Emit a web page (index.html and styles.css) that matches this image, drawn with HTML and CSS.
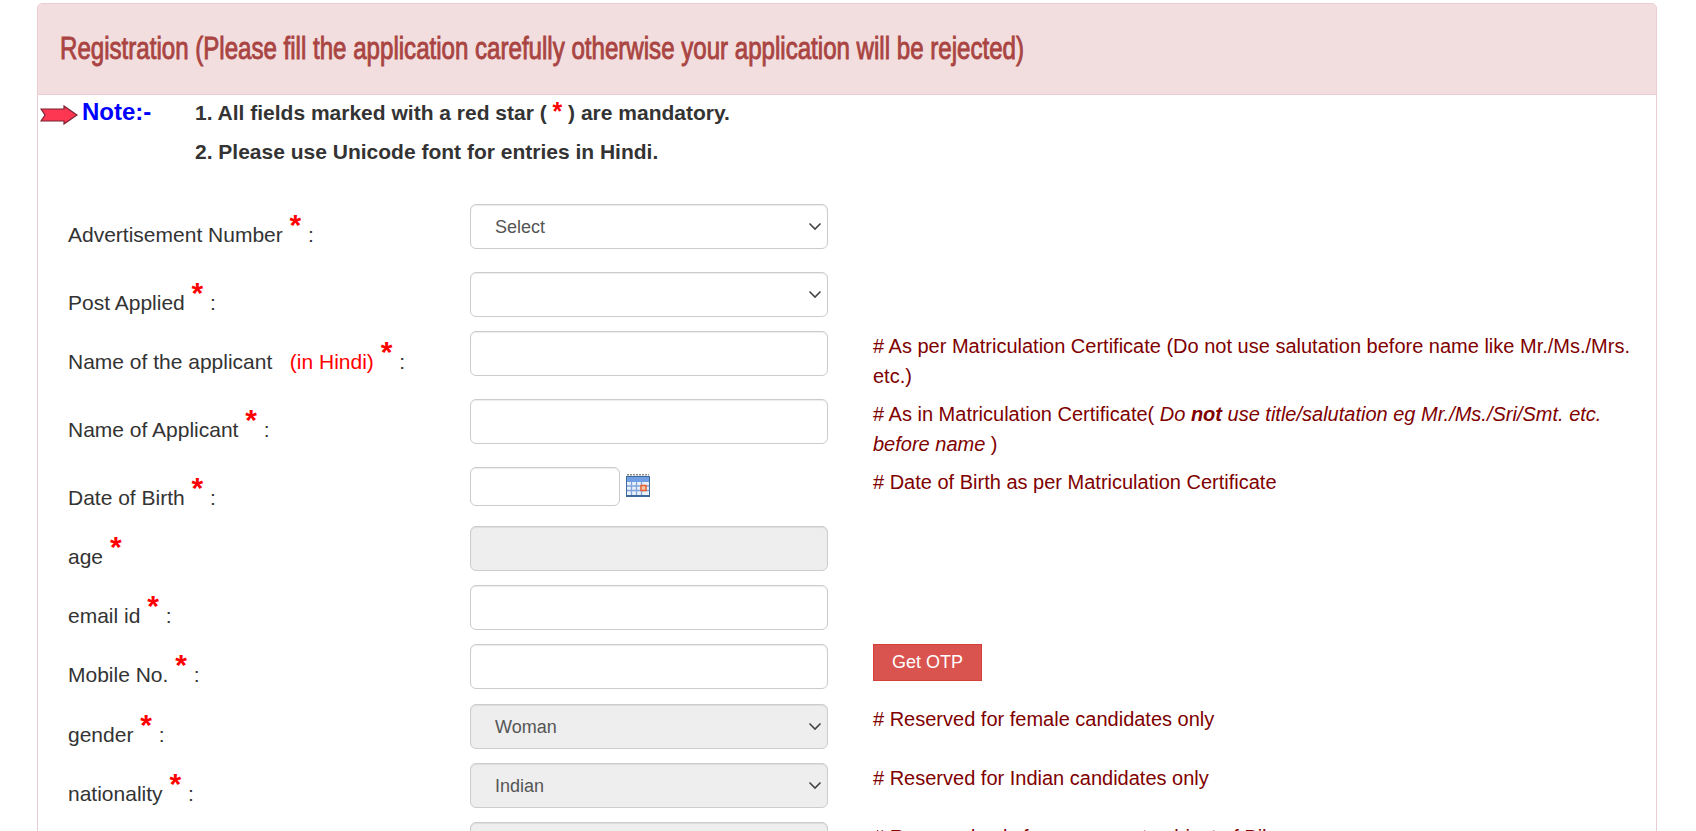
FILE: index.html
```html
<!DOCTYPE html>
<html lang="en">

<head>
  <meta charset="UTF-8">
  <title>Registration</title>
  <link rel="stylesheet" href="styles.css">
</head>

<body>
  <div class="panel">
    <div class="panel-heading">
      <h3 class="panel-title">Registration (Please fill the application carefully otherwise your application will be rejected)</h3>
    </div>
    <div class="panel-body">
      <div class="note">
        <svg class="note-arrow" viewBox="0 0 38 20" width="38" height="20">
          <path d="M1 4 L24 4 L24 1 L37 10 L24 19 L24 16 L1 16 L5 10 Z" fill="#fd3752" stroke="#7a2030" stroke-width="1.2"/>
        </svg>
        <div class="note-title">Note:-</div>
        <div class="note-list">
          <div>1. All fields marked with a red star ( <span class="red note-star">*</span> ) are mandatory.</div>
          <div>2. Please use Unicode font for entries in Hindi.</div>
        </div>
      </div>

      <div class="row tall">
        <label>Advertisement Number <span class="star">*</span> :</label>
        <select class="field"><option>Select</option></select>
      </div>
      <div class="row">
        <label>Post Applied <span class="star">*</span> :</label>
        <select class="field"><option></option></select>
      </div>
      <div class="row tall">
        <label>Name of the applicant &nbsp; <span class="red">(in Hindi)</span> <span class="star">*</span> :</label>
        <input class="field" type="text">
        <p class="hint"># As per Matriculation Certificate (Do not use salutation before name like Mr./Ms./Mrs. etc.)</p>
      </div>
      <div class="row tall">
        <label>Name of Applicant <span class="star">*</span> :</label>
        <input class="field" type="text">
        <p class="hint"># As in Matriculation Certificate( <em>Do <b>not</b> use title/salutation eg Mr./Ms./Sri/Smt. etc. before name</em> )</p>
      </div>
      <div class="row">
        <label>Date of Birth <span class="star">*</span> :</label>
        <div class="date-wrap">
          <input class="field date" type="text">
          <svg class="cal" viewBox="0 0 24 23" width="24" height="23">
            <rect x="0" y="2" width="24" height="21" fill="#3d6a9a"/>
            <rect x="1" y="3" width="22" height="5" fill="#6f9fe2"/>
            <rect x="1" y="8" width="22" height="13" fill="#eaf0f9"/>
            <path d="M1 0.5H23" stroke="#888" stroke-width="2" stroke-dasharray="2 1"/>
            <path d="M5.5 8V21M10.5 8V21M15.5 8V21M1 12H23M1 16.5H23" stroke="#7fa4dc" stroke-width="1.3"/>
            <rect x="15" y="11.500" width="5" height="5" fill="#f6c6a8" stroke="#e8602f" stroke-width="1.5"/>
          </svg>
        </div>
        <p class="hint"># Date of Birth as per Matriculation Certificate</p>
      </div>
      <div class="row">
        <label>age <span class="star">*</span></label>
        <input class="field" type="text" disabled>
      </div>
      <div class="row">
        <label>email id <span class="star">*</span> :</label>
        <input class="field" type="text">
      </div>
      <div class="row mobile">
        <label>Mobile No. <span class="star">*</span> :</label>
        <input class="field" type="text">
        <div class="hint"><button class="btn-otp">Get OTP</button></div>
      </div>
      <div class="row">
        <label>gender <span class="star">*</span> :</label>
        <select class="field" disabled><option>Woman</option></select>
        <p class="hint"># Reserved for female candidates only</p>
      </div>
      <div class="row">
        <label>nationality <span class="star">*</span> :</label>
        <select class="field" disabled><option>Indian</option></select>
        <p class="hint"># Reserved for Indian candidates only</p>
      </div>
      <div class="row">
        <label></label>
        <select class="field" disabled></select>
        <p class="hint"># Reserved only for permanent subject of Bihar</p>
      </div>
    </div>
  </div>
</body>

</html>
```

FILE: styles.css
```css
html, body {
  height: 831px;
  overflow: hidden;
}

body {
  margin: 0;
  font-family: "Liberation Sans", Arial, sans-serif;
  font-size: 20px;
  color: #333;
  background-color: #fff;
}

.panel {
  margin: 3px 39px 0 37px;
  border: 1px solid #ebccd1;
  border-radius: 5px;
}

.panel-heading {
  height: 90px;
  padding: 0 22px;
  display: flex;
  align-items: center;
  background-color: #f2dede;
  border-bottom: 1px solid #ebccd1;
  border-radius: 4px 4px 0 0;
  overflow: hidden;
}

/* no Oswald here, so a squeezed Liberation Sans stands in for it */
.panel-title {
  margin: 0;
  white-space: nowrap;
  font-size: 31px;
  font-weight: 400;
  color: #a94442;
  -webkit-text-stroke: 0.9px #a94442;
  transform: scaleX(0.777);
  transform-origin: left center;
}

.panel-body {
  padding: 0 0 0 30px;
}

.note {
  position: relative;
  display: flex;
  margin-left: -30px;
  height: 109px;
  font-weight: 700;
}

.note-arrow {
  position: absolute;
  left: 2px;
  top: 10px;
}

.note-title {
  margin-left: 44px;
  width: 113px;
  padding-top: 3px;
  font-size: 24px;
  color: #0000ff;
}

.note-list {
  margin-top: -2px;
  font-size: 21px;
}

.note-list div {
  line-height: 39px;
  color: #333;
}

.note-star {
  font-size: 25px;
  font-weight: 700;
  line-height: 0;
}

.red {
  color: #ff0000;
}

.row {
  display: flex;
  height: 59px;
}

.row.tall {
  height: 68px;
}

.row.mobile {
  height: 60px;
}

label {
  width: 402px;
  padding-top: 19px;
  flex-shrink: 0;
  font-size: 21px;
}

.star {
  margin: 0 1px;
  color: #ff0000;
  font-size: 30px;
  font-weight: 700;
  line-height: 0;
  vertical-align: 7px;
}

.field {
  width: 358px;
  height: 45px;
  flex-shrink: 0;
  box-sizing: border-box;
  padding: 6px 20px;
  border: 1px solid #ccc;
  border-radius: 6px;
  font-family: inherit;
  font-size: 18px;
  color: #555;
  background-color: #fff;
  box-shadow: inset 0 1px 1px rgba(0, 0, 0, .075);
}

.field:disabled {
  background-color: #eee;
  color: #555;
  opacity: 1;
}

select.field {
  appearance: none;
  padding-left: 24px;
  background-image: url("data:image/svg+xml,%3Csvg xmlns='http://www.w3.org/2000/svg' width='14' height='9'%3E%3Cpath d='M1.5 1.5L7 7L12.5 1.5' fill='none' stroke='%23444' stroke-width='1.6'/%3E%3C/svg%3E");
  background-repeat: no-repeat;
  background-position: right 5px center;
}

.date-wrap {
  width: 358px;
  flex-shrink: 0;
  display: flex;
  align-items: flex-start;
}

.field.date {
  width: 150px;
  height: 39px;
}

.cal {
  margin: 7px 0 0 6px;
}

.hint {
  margin: 0 0 0 45px;
  width: 760px;
  line-height: 30px;
  color: #800000;
}

.btn-otp {
  display: block;
  width: 109px;
  height: 37px;
  border: 1px solid #d43f3a;
  background-color: #d9534f;
  color: #fff;
  font-family: inherit;
  font-size: 18px;
}
```
